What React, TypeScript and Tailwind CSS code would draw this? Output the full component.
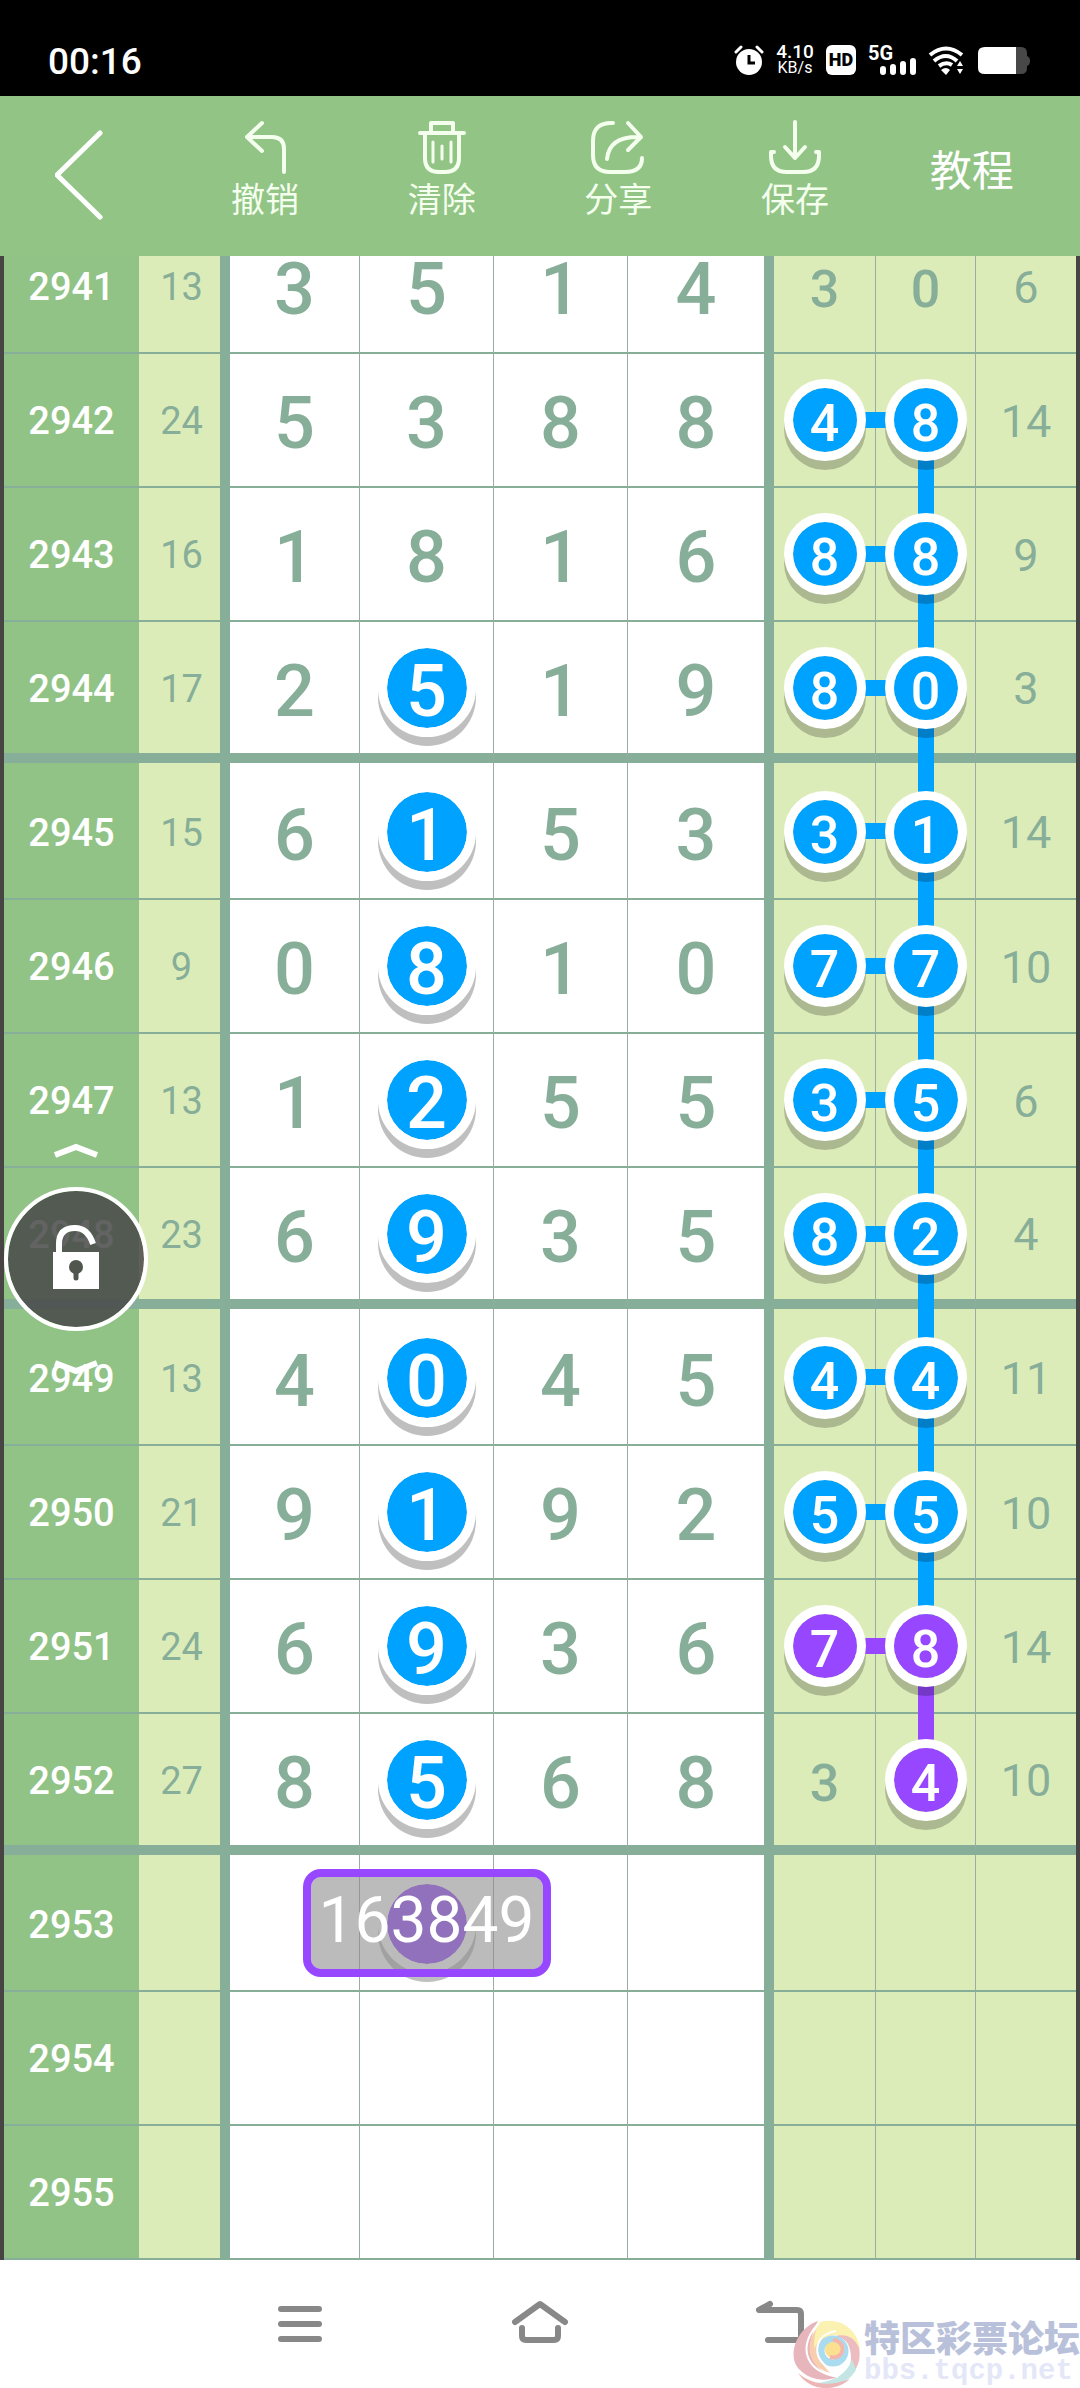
import type { ReactNode } from "react";

type Tone = "blue" | "purple";

interface Draw {
  period: string;
  sum?: number;
  digits?: number[];
  tail?: number[];
  picked?: Tone; // second digit column
  left?: Tone;
  right?: Tone;
  down?: Tone; // connector to the next row
  guess?: string;
}

const draws: Draw[] = [
  { period: "2941", sum: 13, digits: [3, 5, 1, 4], tail: [3, 0, 6] },
  { period: "2942", sum: 24, digits: [5, 3, 8, 8], tail: [4, 8, 14], left: "blue", right: "blue", down: "blue" },
  { period: "2943", sum: 16, digits: [1, 8, 1, 6], tail: [8, 8, 9], left: "blue", right: "blue", down: "blue" },
  { period: "2944", sum: 17, digits: [2, 5, 1, 9], tail: [8, 0, 3], picked: "blue", left: "blue", right: "blue", down: "blue" },
  { period: "2945", sum: 15, digits: [6, 1, 5, 3], tail: [3, 1, 14], picked: "blue", left: "blue", right: "blue", down: "blue" },
  { period: "2946", sum: 9, digits: [0, 8, 1, 0], tail: [7, 7, 10], picked: "blue", left: "blue", right: "blue", down: "blue" },
  { period: "2947", sum: 13, digits: [1, 2, 5, 5], tail: [3, 5, 6], picked: "blue", left: "blue", right: "blue", down: "blue" },
  { period: "2948", sum: 23, digits: [6, 9, 3, 5], tail: [8, 2, 4], picked: "blue", left: "blue", right: "blue", down: "blue" },
  { period: "2949", sum: 13, digits: [4, 0, 4, 5], tail: [4, 4, 11], picked: "blue", left: "blue", right: "blue", down: "blue" },
  { period: "2950", sum: 21, digits: [9, 1, 9, 2], tail: [5, 5, 10], picked: "blue", left: "blue", right: "blue", down: "blue" },
  { period: "2951", sum: 24, digits: [6, 9, 3, 6], tail: [7, 8, 14], picked: "blue", left: "purple", right: "purple", down: "purple" },
  { period: "2952", sum: 27, digits: [8, 5, 6, 8], tail: [3, 4, 10], picked: "blue", right: "purple" },
  { period: "2953", picked: "purple", guess: "163849" },
  { period: "2954" },
  { period: "2955" },
];

const toneBg = { blue: "bg-[#00a2ff]", purple: "bg-[#9747ff]" };

function BigDigit({ value, tone }: { value?: number; tone?: Tone }) {
  return (
    <div className="relative mb-0.5 flex items-center justify-center">
      {tone && (
        <span
          className={`absolute z-20 size-[98px] rounded-full border-[9px] border-white bg-clip-padding shadow-[0_9px_0_rgba(0,0,0,0.25)] ${toneBg[tone]}`}
        />
      )}
      <span className={`relative z-20 pt-2 text-[72px] leading-none font-medium ${tone ? "text-white" : "text-[#87ae98]"}`}>
        {value}
      </span>
    </div>
  );
}

function SmallDigit({ value, tone }: { value?: number; tone?: Tone }) {
  return (
    <div className="relative mb-0.5 flex items-center justify-center">
      {tone && (
        <span
          className={`absolute z-20 size-[82px] rounded-full border-[9px] border-white bg-clip-padding shadow-[0_9px_0_rgba(0,0,0,0.22)] ${toneBg[tone]}`}
        />
      )}
      <span className={`relative z-20 pt-2 text-[52px] leading-none font-medium ${tone ? "text-white" : "text-[#87ae98]"}`}>
        {value}
      </span>
    </div>
  );
}

function DrawRow({ draw, index }: { draw: Draw; index: number }) {
  const endsGroup = index % 4 === 3;
  const startsGroup = index % 4 === 0 && index > 0;

  const height = endsGroup ? "h-[141px]" : startsGroup ? "h-[137px]" : "h-[134px]";
  const line = endsGroup ? "border-b-10" : "border-b-2";
  const cell = `relative border-[#87ae98] p-0 text-center align-middle ${line} ${startsGroup ? "pt-1" : "pt-0.5"}`;
  const thin = "border-r border-r-[#9eaaa4]";

  return (
    <tr className={height}>
      <th scope="row" className={`${cell} bg-[#90c385] text-[38px] leading-none font-medium text-white`}>
        {draw.period}
      </th>
      <td className={`${cell} border-r-10 bg-[#dcecb9] pl-1 text-[38px] leading-none text-[#87ae98]`}>{draw.sum}</td>

      {[0, 1, 2, 3].map((i) => (
        <td key={i} className={`${cell} bg-white ${i === 3 ? "border-r-10" : thin}`}>
          <BigDigit value={draw.digits?.[i]} tone={i === 1 ? draw.picked : undefined} />
          {i === 1 && draw.guess && (
            <span className="absolute top-1/2 left-1/2 z-30 flex h-[108px] w-[248px] -translate-1/2 items-center justify-center rounded-[18px] border-8 border-[#9747ff] bg-[#8d8d8d]/60 bg-clip-padding pb-1 text-[64px] leading-none text-white">
              {draw.guess}
            </span>
          )}
        </td>
      ))}

      <td className={`${cell} bg-[#dcecb9] ${thin}`}>
        {draw.left && draw.right && (
          <span className={`absolute top-1/2 left-1/2 z-10 h-4 w-full -translate-y-1/2 ${toneBg[draw.left]}`} />
        )}
        <SmallDigit value={draw.tail?.[0]} tone={draw.left} />
      </td>
      <td className={`${cell} bg-[#dcecb9] ${thin}`}>
        {draw.down && (
          <span
            className={`absolute top-1/2 left-1/2 z-10 w-4 -translate-x-1/2 ${endsGroup ? "h-[144px]" : "h-[134px]"} ${toneBg[draw.down]}`}
          />
        )}
        <SmallDigit value={draw.tail?.[1]} tone={draw.right} />
      </td>
      <td className={`${cell} bg-[#dcecb9] text-[45px] leading-none text-[#87ae98]`}>{draw.tail?.[2]}</td>
    </tr>
  );
}

function StatusBar() {
  return (
    <div className="flex h-24 items-center justify-between bg-black pt-6 pr-12 pl-12 text-white">
      <span className="pt-0.5 text-[37px] leading-none font-medium">00:16</span>

      <div className="flex items-center">
        {/* alarm */}
        <svg className="size-[30px]" viewBox="0 0 30 30" fill="none">
          <circle cx="15" cy="17" r="13" fill="#fff" />
          <path d="M2 7l5-5M28 7l-5-5" stroke="#fff" strokeWidth="3" strokeLinecap="round" />
          <path d="M15 10v8h6" stroke="#000" strokeWidth="3" />
        </svg>
        <div className="ml-3 flex w-[38px] flex-col items-center">
          <span className="text-[19px] leading-4 font-medium">4.10</span>
          <span className="text-[16px] leading-4">KB/s</span>
        </div>
        {/* HD */}
        <span className="ml-3 flex size-[30px] items-center justify-center rounded-md bg-white text-[18px] leading-none font-black text-black">
          HD
        </span>
        <div className="relative ml-3 h-[30px] w-12">
          <span className="absolute top-0 left-0 text-[20px] leading-4 font-bold">5G</span>
          <svg className="h-[30px] w-12" viewBox="0 0 48 30" stroke="#fff" strokeWidth="6" strokeLinecap="round">
            <path d="M15 24v3M25 22v5M35 19v8M45 16v11" />
          </svg>
        </div>
        {/* wifi */}
        <svg className="ml-3 h-[30px] w-9" viewBox="0 0 36 30" fill="none" stroke="#fff" strokeWidth="4">
          <path d="M2 10Q18-3 34 10" />
          <path d="M6 16Q18 6 29 16" />
          <path d="M11 21Q18 16 24 20" />
          <path d="M13 25q5-4 9 0l-4 5z" fill="#fff" stroke="none" />
          <path d="M29 21l3-5 3 5zM29 24l3 5 3-5z" fill="#fff" stroke="none" />
        </svg>
        {/* battery */}
        <svg className="ml-3 h-[30px] w-[56px]" viewBox="0 0 56 30">
          <path d="M39 2h6q6 0 6 6v3q3 1 3 5t-3 5v2q0 6-6 6h-6z" fill="#484848" />
          <path d="M40 2H9q-7 0-7 6v15q0 6 7 6h31z" fill="#fff" />
        </svg>
      </div>
    </div>
  );
}

function ToolButton({ label, children }: { label: string; children: ReactNode }) {
  return (
    <button type="button" className="flex flex-1 cursor-pointer flex-col items-center gap-1.5 pb-3">
      <svg
        className="size-[54px]"
        viewBox="0 0 54 54"
        fill="none"
        stroke="#f4ffee"
        strokeWidth="4"
        strokeLinecap="round"
        strokeLinejoin="round"
      >
        {children}
      </svg>
      <span className="text-[34px] leading-10 text-[#f4ffee]">{label}</span>
    </button>
  );
}

function Toolbar() {
  return (
    <header className="flex h-40 items-center bg-[#92c486] pr-5">
      <button type="button" aria-label="返回" className="flex flex-1 cursor-pointer justify-center">
        <svg className="h-24 w-[66px]" viewBox="0 0 66 96" fill="none" stroke="#fff" strokeWidth="5" strokeLinecap="round">
          <path d="M45 5L2 47l43 42" />
        </svg>
      </button>
      <ToolButton label="撤销">
        <path d="M24 3L9 17l15 14M9 17h25q12 0 12 12v23" />
      </ToolButton>
      <ToolButton label="清除">
        <path d="M5 13h44M16 12V3h22v9M10 14v24q0 14 14 14h6q14 0 14-14V14" />
        <path d="M18 22v20M27 26v13M36 22v20" strokeWidth="3" />
      </ToolButton>
      <ToolButton label="分享">
        <path d="M22 3q-20-1-20 18v14q0 17 17 17h15q17 0 17-14" />
        <path d="M37 3l13 14-13 13M49 17q-31-1-33 22" />
      </ToolButton>
      <ToolButton label="保存">
        <path d="M27 2v36M17 27l10 11 10-11M6 32H3v4q0 16 16 16h16q16 0 16-16v-4h-3" />
      </ToolButton>
      <button type="button" className="flex-1 cursor-pointer pb-2 text-[42px] leading-none text-white">
        教程
      </button>
    </header>
  );
}

function LockButton() {
  return (
    <div className="absolute top-[886px] left-0 z-40 flex flex-col items-center gap-[29px]">
      <svg className="h-4 w-11" viewBox="0 0 44 16" fill="none" stroke="#fff" strokeWidth="6">
        <path d="M1 13l21-8 21 8" />
      </svg>
      <button
        type="button"
        aria-label="解锁"
        className="flex size-[144px] cursor-pointer items-center justify-center rounded-full border-4 border-white bg-[#484848]/85 bg-clip-padding pb-1"
      >
        <svg className="h-16 w-12" viewBox="0 0 48 64" fill="none">
          <path d="M7 30V19Q7 3 23 3q13 0 18 16" stroke="#fff" strokeWidth="6" />
          <path d="M1 27h46v37H1z" fill="#fff" />
          <circle cx="24" cy="42" r="7" fill="#50564d" />
          <path d="M24 44v9" stroke="#50564d" strokeWidth="5" strokeLinecap="round" />
        </svg>
      </button>
      <svg className="h-4 w-11" viewBox="0 0 44 16" fill="none" stroke="#fff" strokeWidth="6">
        <path d="M1 3l21 8 21-8" />
      </svg>
    </div>
  );
}

function Watermark() {
  return (
    <div className="absolute right-0 bottom-0 flex items-center gap-1">
      <svg className="size-[68px]" viewBox="0 0 68 68" fill="none">
        <path d="M26 1C4 8-6 38 8 50c10 10 24 12 38 7C22 53 10 32 26 1z" fill="#e6b6bc" />
        <path d="M28 4C12 22 14 46 38 53 26 40 22 24 40 14z" fill="#f8cfae" />
        <path d="M28 2c22-6 40 10 40 30C62 18 48 12 34 17c-6 2-9 6-12 12 0-14 2-22 6-27z" fill="#fbf1b0" />
        <path d="M67 28c3 16-5 28-20 34 12-12 15-24 9-38-4-6-10-8-16-7 12-4 22-1 27 11z" fill="#ecbcc0" />
        <path d="M64 50c-8 14-26 20-40 13 18-1 32-10 36-24z" fill="#c3e5e4" />
        <path d="M6 53c14 12 32 14 52 6C44 72 18 72 6 53z" fill="#ecb6b6" />
        <circle cx="41" cy="31" r="12" stroke="#a9dcf0" strokeWidth="7" />
        <circle cx="41" cy="30" r="8" fill="#fbe08f" />
        <path d="M38 37c8 2 14-3 12-11-2-4-5-6-9-6" stroke="#f3b6ac" strokeWidth="4" />
        <path d="M27 3C8 22 8 50 46 57M44 11C24 14 18 34 36 48" stroke="#fff" strokeWidth="2" />
      </svg>
      <div className="flex flex-col items-start whitespace-nowrap">
        <span className="text-[36px] leading-9 font-black text-[#b9c1da]">特区彩票论坛</span>
        <span className="font-['Liberation_Mono',monospace] text-[29px] leading-7 font-bold text-[#e4e7f7]">bbs.tqcp.net</span>
      </div>
    </div>
  );
}

function NavBar() {
  const icon = "h-12 w-[60px]";
  const stroke = {
    fill: "none",
    stroke: "#888",
    strokeWidth: 6,
    strokeLinecap: "round" as const,
    strokeLinejoin: "round" as const,
  };

  return (
    <nav className="relative flex h-32 items-center bg-white px-45">
      <button type="button" aria-label="菜单" className="flex flex-1 cursor-pointer justify-center">
        <svg className={icon} viewBox="0 0 60 48" {...stroke}>
          <path d="M11 9h38M11 24h38M11 39h38" />
        </svg>
      </button>
      <button type="button" aria-label="主页" className="flex flex-1 cursor-pointer justify-center">
        <svg className={icon} viewBox="0 0 60 48" {...stroke}>
          <path d="M5 22L30 4l25 18M12 28v8q0 4 4 4h28q4 0 4-4v-8" />
        </svg>
      </button>
      <button type="button" aria-label="返回上一页" className="flex flex-1 cursor-pointer justify-center">
        <svg className={icon} viewBox="0 0 60 48" {...stroke}>
          <path d="M20 4L9 10h38q4 0 4 4v26H18" />
        </svg>
      </button>
      <Watermark />
    </nav>
  );
}

export default function App() {
  return (
    <div className="min-h-screen overflow-hidden bg-white font-[Roboto,'Noto_Sans_CJK_SC',sans-serif]">
      <StatusBar />
      <Toolbar />

      {/* CHART */}
      <main className="relative overflow-hidden border-x-4 border-[#484444]">
        <table className="-mt-9 w-full table-fixed border-separate border-spacing-0">
          <colgroup>
            <col className="w-[135px]" />
            <col className="w-[91px]" />
            <col className="w-[130px]" />
            <col className="w-[134px]" />
            <col className="w-[134px]" />
            <col className="w-[146px]" />
            <col className="w-[102px]" />
            <col className="w-[100px]" />
            <col className="w-[100px]" />
          </colgroup>
          <tbody>
            {draws.map((draw, index) => (
              <DrawRow key={draw.period} draw={draw} index={index} />
            ))}
          </tbody>
        </table>
        <LockButton />
      </main>

      <NavBar />
    </div>
  );
}
